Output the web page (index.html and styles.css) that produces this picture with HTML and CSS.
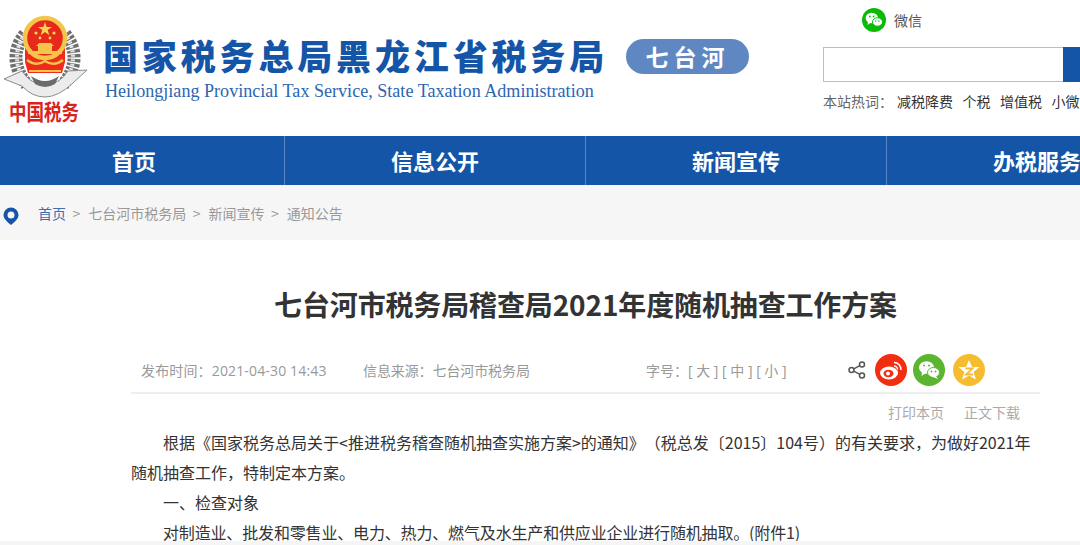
FILE: index.html
```html
<!DOCTYPE html>
<html lang="zh-CN">
<head>
<meta charset="utf-8">
<title>七台河市税务局稽查局2021年度随机抽查工作方案</title>
<link rel="stylesheet" href="styles.css">
</head>
<body>
<header class="top">
  <svg class="emblem" viewBox="0 0 88 130" width="88" height="130">
    <path d="M25 34 Q6 58 27 85" fill="none" stroke="#6f6f6f" stroke-width="13" stroke-dasharray="3 1.500"/>
    <path d="M65 34 Q84 58 63 85" fill="none" stroke="#6f6f6f" stroke-width="13" stroke-dasharray="3 1.500"/>
    <path d="M25 34 Q8 58 27 85" fill="none" stroke="#e2e2e2" stroke-width="4" stroke-dasharray="2 2.500"/>
    <path d="M65 34 Q82 58 63 85" fill="none" stroke="#e2e2e2" stroke-width="4" stroke-dasharray="2 2.500"/>
    <path d="M4 79 L22 71 Q30 84 45 85 Q60 84 68 71 L87 70 L73 83 Q58 97 45 97 Q32 97 22 86 Z" fill="#ececec" stroke="#8c8c8c" stroke-width="1"/>
    <path d="M31 76 Q45 86 59 76 L55 84 Q45 90 35 84 Z" fill="#6b6b6b"/>
    <path d="M25 40 H65 V62 L62 73 H28 L25 62 Z" fill="#ef2b1d"/>
    <circle cx="45" cy="38" r="20" fill="#e6291b" stroke="#f4c548" stroke-width="4.500"/>
    <path d="M45 22 l1.700 5 h5.300 l-4.300 3.100 1.600 5.100 -4.300-3.100 -4.300 3.100 1.600-5.100 -4.300-3.100 h5.300 Z" fill="#f7d455"/>
    <circle cx="36" cy="33" r="1.600" fill="#f7d455"/><circle cx="54" cy="33" r="1.600" fill="#f7d455"/>
    <circle cx="40" cy="38" r="1.400" fill="#f7d455"/><circle cx="50" cy="38" r="1.400" fill="#f7d455"/>
    <path d="M38 51 V46 H36 L39 43 H51 L54 46 H52 V51 H62 V54 H28 V51 Z" fill="#f4c548"/>
    <path d="M27 60 Q36 67 45 61 Q54 67 63 60" fill="none" stroke="#f4c548" stroke-width="2.500"/>
    <path d="M29 71 H61" stroke="#f4c548" stroke-width="2"/>
    <g transform="translate(9 120) scale(1 1.250)"><text class="seal">中国税务</text></g>
  </svg>
  <div class="brand">
    <div class="brand-main">
      <span class="brand-cn">国家税务总局黑龙江省税务局</span>
      <span class="pill">七台河</span>
    </div>
    <div class="brand-en">Heilongjiang Provincial Tax Service, State Taxation Administration</div>
  </div>
  <div class="tools">
    <div class="wx">
      <svg class="wx-icon" viewBox="0 0 24 24" width="24" height="24">
        <circle cx="12" cy="12" r="12" fill="#09bb07"/>
        <ellipse cx="9.800" cy="10" rx="6.200" ry="5.200" fill="#fff"/>
        <path d="M6 13.500 L5.500 17 L9 14.500Z" fill="#fff"/>
        <ellipse cx="15.500" cy="14" rx="5" ry="4.200" fill="#fff" stroke="#09bb07" stroke-width="1"/>
        <circle cx="7.800" cy="8.500" r="0.900" fill="#09bb07"/><circle cx="11.600" cy="8.500" r="0.900" fill="#09bb07"/>
        <circle cx="13.800" cy="13" r="0.700" fill="#09bb07"/><circle cx="17" cy="13" r="0.700" fill="#09bb07"/>
      </svg>
      <span>微信</span>
    </div>
    <div class="search"><div class="search-input"></div><div class="search-btn"></div></div>
    <div class="hot">
      <span class="hot-label">本站热词：</span><span>减税降费</span><span>个税</span><span>增值税</span><span>小微企业</span>
    </div>
  </div>
</header>
<nav class="nav">
  <a class="nav-first">首页</a><a>信息公开</a><a>新闻宣传</a><a>办税服务</a>
</nav>
<div class="crumbs">
  <svg class="pin" viewBox="0 0 16 18" width="16" height="18">
    <path fill-rule="evenodd" d="M8 0.500 A7.500 7.500 0 0 1 15.500 8 C15.500 12 11 15.500 8 18 C5 15.500 0.500 12 0.500 8 A7.500 7.500 0 0 1 8 0.500 Z M8 4.500 A3.500 3.500 0 1 0 8 11.500 A3.500 3.500 0 1 0 8 4.500 Z" fill="#1555a7"/>
  </svg>
  <a class="crumb-home">首页</a><i>&gt;</i><a>七台河市税务局</a><i>&gt;</i><a>新闻宣传</a><i>&gt;</i><a>通知公告</a>
</div>
<main class="article">
  <h1>七台河市税务局稽查局2021年度随机抽查工作方案</h1>
  <div class="meta">
    <span class="meta-time">发布时间：2021-04-30 14:43</span>
    <span class="meta-src">信息来源：七台河市税务局</span>
    <span class="meta-size">字号：[ 大 ] [ 中 ] [ 小 ]</span>
    <svg class="share" viewBox="0 0 18 18" width="18" height="18" fill="none" stroke="#555" stroke-width="1.500">
      <circle cx="14" cy="3.500" r="2.500"/><circle cx="14" cy="14.500" r="2.500"/><circle cx="3.500" cy="9" r="2.500"/>
      <path d="M5.800 7.800 L11.800 4.700 M5.800 10.200 L11.800 13.300"/>
    </svg>
    <svg class="round" viewBox="0 0 32 32" width="32" height="32">
      <circle cx="16" cy="16" r="16" fill="#f32d10"/>
      <ellipse cx="14" cy="19" rx="9" ry="6.500" fill="#fff"/>
      <ellipse cx="13.500" cy="19.500" rx="5" ry="3.800" fill="#f32d10"/>
      <circle cx="13" cy="19.500" r="2" fill="#fff"/>
      <path d="M19 8.500 A7 7 0 0 1 26 16 M19 12 A3.500 3.500 0 0 1 22.500 15.500" fill="none" stroke="#fff" stroke-width="1.500"/>
    </svg>
    <svg class="round round-wx" viewBox="0 0 32 32" width="32" height="32">
      <circle cx="16" cy="16" r="16" fill="#5cb531"/>
      <ellipse cx="13.500" cy="13.500" rx="7.500" ry="6.300" fill="#fff"/>
      <path d="M9 18 L8.500 22 L13 19Z" fill="#fff"/>
      <ellipse cx="20.500" cy="18.500" rx="6" ry="5" fill="#fff" stroke="#5cb531" stroke-width="1"/>
      <path d="M23 22 L25 25 L20 23Z" fill="#fff"/>
      <circle cx="11" cy="11.500" r="1" fill="#5cb531"/><circle cx="16" cy="11.500" r="1" fill="#5cb531"/>
      <circle cx="18.500" cy="17.500" r="0.900" fill="#5cb531"/><circle cx="22.500" cy="17.500" r="0.900" fill="#5cb531"/>
    </svg>
    <svg class="round round-qq" viewBox="0 0 32 32" width="32" height="32">
      <circle cx="16" cy="16" r="16" fill="#f6bc2f"/>
      <path d="M16 6 L19 13 H26.500 L20.500 18 L23 25.500 L16 21.500 L9 25.500 L11.500 18 L5.500 13 H13 Z" fill="#fff"/>
      <path d="M12.500 14.500 H19.500 L13 20.500 H20" fill="none" stroke="#f6bc2f" stroke-width="1.800"/>
    </svg>
  </div>
  <div class="actions"><a>打印本页</a><a>正文下载</a></div>
  <div class="body">
    <p>根据《国家税务总局关于&lt;推进税务稽查随机抽查实施方案&gt;的通知》（税总发〔2015〕104号）的有关要求，为做好2021年随机抽查工作，特制定本方案。</p>
    <p>一、检查对象</p>
    <p>对制造业、批发和零售业、电力、热力、燃气及水生产和供应业企业进行随机抽取。(附件1)</p>
  </div>
</main>
</body>
</html>
```
FILE: styles.css
```css
html, body { margin: 0; padding: 0; }
body {
  width: 1080px;
  height: 545px;
  overflow: hidden;
  background: #fff;
  font-family: "Noto Sans CJK SC", "Liberation Sans", sans-serif;
  color: #333;
  box-sizing: border-box;
  border-bottom: 4px solid #f5f5f5;
  text-spacing-trim: space-all;
}
.top { display: flex; height: 136px; }
.emblem { flex: none; margin-right: 15px; display: block; }
.seal { font-size: 17.500px; font-weight: 700; fill: #d8231c; font-family: "Noto Sans CJK SC", sans-serif; }
.brand { flex: none; width: 720px; padding-top: 35px; box-sizing: border-box; }
.brand-main { display: flex; align-items: center; height: 40px; }
.brand-cn { font-size: 35px; line-height: 40px; font-weight: 900; color: #1555a7; letter-spacing: 3.850px; white-space: nowrap; }
.pill { margin-left: 18px; margin-top: 2px; width: 123px; height: 35px; border-radius: 18px; background: #5f88c3; color: #fff; font-size: 23px; line-height: 35px; font-weight: 700; text-align: center; letter-spacing: 5px; }
.brand-en { font-family: "Liberation Serif", serif; font-size: 18.100px; line-height: 20px; color: #2c66b3; margin-top: 6px; margin-left: 2px; white-space: nowrap; }
.tools { flex: none; width: 300px; }
.wx { display: flex; align-items: center; gap: 8px; margin: 8px 0 0 39px; height: 24px; font-size: 14px; line-height: 20px; color: #555; }
.search { display: flex; height: 35px; margin-top: 15px; width: 300px; }
.search-input { width: 240px; box-sizing: border-box; border: 1px solid #bdbdbd; border-right: 0; background: #fff; }
.search-btn { width: 60px; background: #1555a7; flex: none; }
.hot { display: flex; gap: 9.500px; margin-top: 9px; font-size: 14px; line-height: 20px; color: #333; white-space: nowrap; }
.hot-label { color: #666; width: 64.500px; }
.nav { display: flex; height: 49px; background: #1555a7; }
.nav a { flex: none; width: 300px; border-right: 1px solid #5a85c4; color: #fff; font-size: 22px; font-weight: 700; line-height: 48px; text-align: center; }
.nav .nav-first { width: 268px; padding-right: 16px; }
.crumbs { display: flex; align-items: center; height: 55px; background: #f6f6f6; padding-left: 3px; font-size: 14px; color: #999; }
.crumbs .pin { flex: none; margin: 6px 19px 0 0; }
.crumbs i { font-style: normal; margin: 0 8px 0 6.500px; }
.crumbs .crumb-home { color: #3f6fae; }
.article { padding: 0 40px 0 131px; }
h1 { margin: 45px 0 0; font-size: 28px; line-height: 38px; font-weight: 700; letter-spacing: -0.130px; color: #333; text-align: center; width: 909px; white-space: nowrap; }
.meta { display: flex; align-items: center; height: 45px; margin-top: 24px; border-bottom: 2px solid #eee; padding-left: 10px; font-family: "Open Sans", "Noto Sans CJK SC", sans-serif; font-size: 14px; color: #999; }
.meta-time { width: 222px; letter-spacing: 0.150px; white-space: nowrap; }
.meta-src { width: 283px; white-space: nowrap; letter-spacing: -0.100px; }
.meta-size { width: 202px; white-space: nowrap; }
.share { flex: none; }
.round { flex: none; margin-left: 9px; }
.round-wx { margin-left: 6px; }
.round-qq { margin-left: 8px; }
.actions { display: flex; justify-content: flex-end; gap: 20px; height: 33px; padding: 8px 20px 0 0; box-sizing: border-box; font-size: 14px; line-height: 20px; color: #aaa; }
.body { font-size: 16px; line-height: 30px; color: #333; width: 905px; }
.body p { margin: 0; text-indent: 32px; }
.body p:last-child { letter-spacing: -0.160px; }
```
